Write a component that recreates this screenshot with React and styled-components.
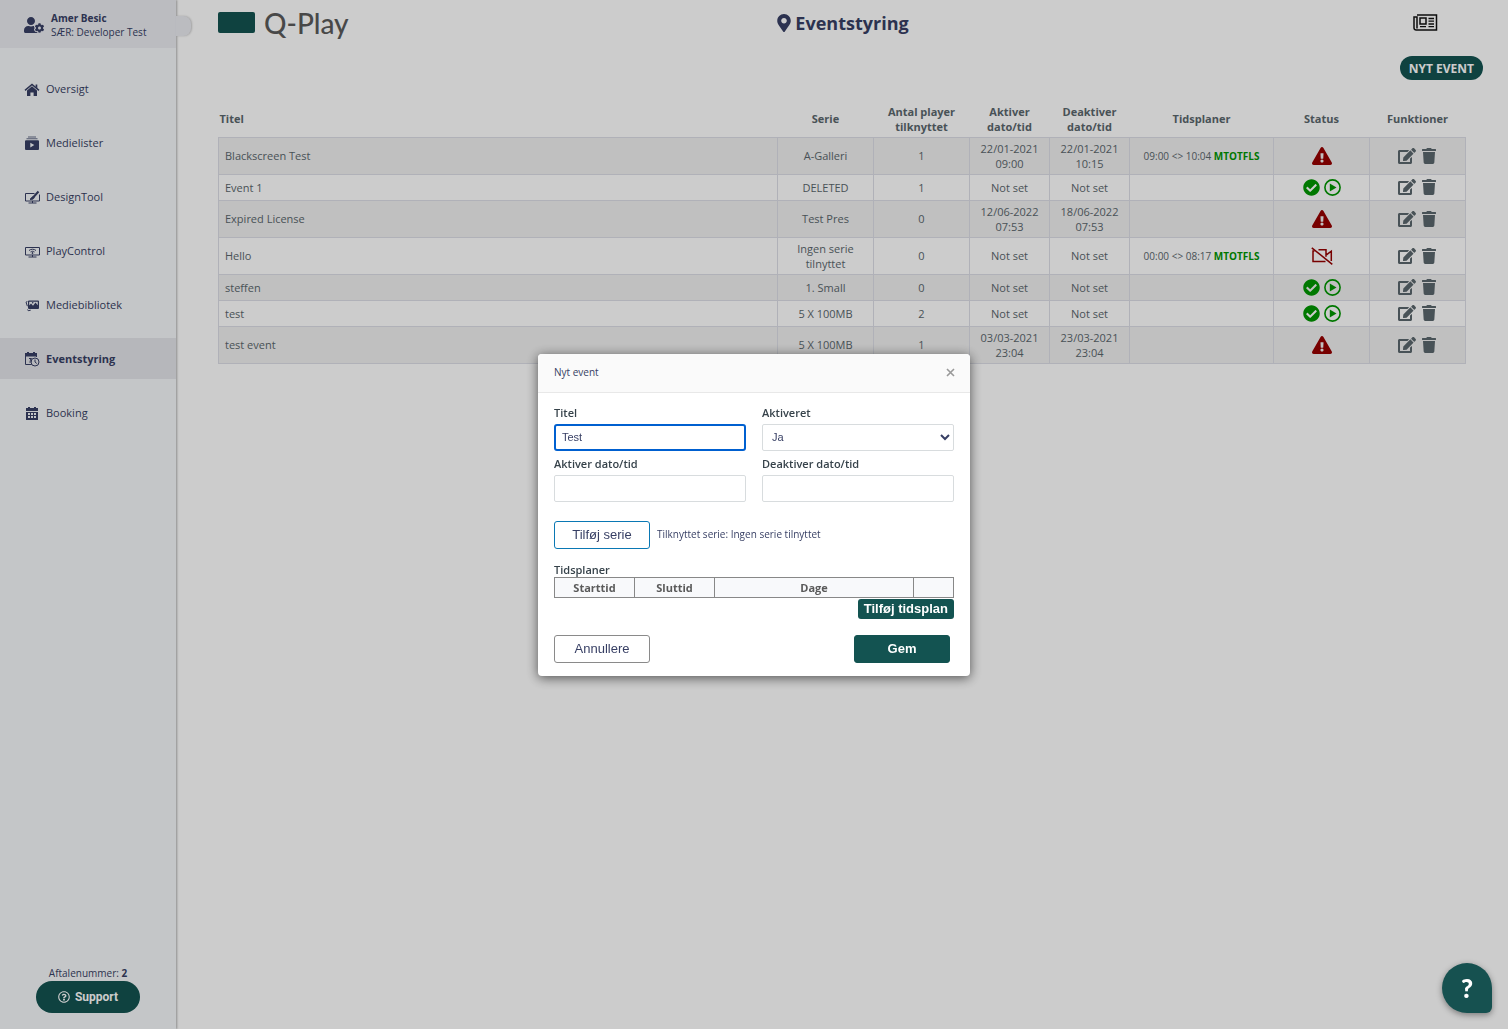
import React from "react";
import styled, { createGlobalStyle } from "styled-components";
import { FaUserCog, FaMapMarkerAlt, FaEdit, FaTrash, FaExclamationTriangle, FaCheckCircle, FaRegQuestionCircle } from "react-icons/fa";

const events = [
    { title: "Blackscreen Test", serie: "A-Galleri", players: 1, from: "22/01-2021 09:00", to: "22/01-2021 10:15", plan: "09:00 <> 10:04", status: "warning" },
    { title: "Event 1", serie: "DELETED", players: 1, from: "Not set", to: "Not set", status: "ok" },
    { title: "Expired License", serie: "Test Pres", players: 0, from: "12/06-2022 07:53", to: "18/06-2022 07:53", status: "warning" },
    { title: "Hello", serie: "Ingen serie tilnyttet", players: 0, from: "Not set", to: "Not set", plan: "00:00 <> 08:17", status: "off" },
    { title: "steffen", serie: "1. Small", players: 0, from: "Not set", to: "Not set", status: "ok" },
    { title: "test", serie: "5 X 100MB", players: 2, from: "Not set", to: "Not set", status: "ok" },
    { title: "test event", serie: "5 X 100MB", players: 1, from: "03/03-2021 23:04", to: "23/03-2021 23:04", status: "warning" },
];

const menu = [
    { name: "Oversigt", Icon: HomeIcon },
    { name: "Medielister", Icon: PlaylistIcon },
    { name: "DesignTool", Icon: DesignIcon },
    { name: "PlayControl", Icon: ControlIcon },
    { name: "Mediebibliotek", Icon: LibraryIcon },
    { name: "Eventstyring", Icon: EventIcon, active: true },
    { name: "Booking", Icon: BookingIcon },
];

function HomeIcon() {
    return (
        <svg width="16" height="16" viewBox="0 0 16 16" fill="currentColor">
            <path d="M8 5.2 13 9.6V15H9.600v-3.600H6.400V15H3V9.600z" />
            <path d="M1 9.400 8 3.400l7 6" fill="none" stroke="currentColor" strokeWidth="1.500" />
            <path d="M11.600 3.400h1.700v4l-1.700-1.400z" />
        </svg>
    );
}

function PlaylistIcon() {
    return (
        <svg width="16" height="16" viewBox="0 0 16 16" fill="currentColor">
            <path d="M4 1.400h8v1H4zM2.500 3.200h11v1.100h-11z" opacity="0.75" />
            <path fillRule="evenodd" d="M2 5.200h12a1 1 0 0 1 1 1V14a1 1 0 0 1-1 1H2a1 1 0 0 1-1-1V6.200a1 1 0 0 1 1-1zM6.300 7.700v4.800l4-2.400z" />
        </svg>
    );
}

function DesignIcon() {
    return (
        <svg width="16" height="16" viewBox="0 0 16 16" fill="none" stroke="currentColor">
            <path d="M10.500 4.500h-9v7.500h14V5.500M8.500 12v2M4.500 14h8" />
            <path d="m14.500 2.500-5 5.500" strokeWidth="2" />
            <path d="M9.500 7.500c-2 0-2 2-3.500 2.800 2 .6 4-.3 4.200-2z" fill="currentColor" />
        </svg>
    );
}

function ControlIcon() {
    return (
        <svg width="16" height="16" viewBox="0 0 16 16" fill="none" stroke="currentColor">
            <path d="M1.500 4.500h14V12h-14zM8.500 12v2M4.500 14h8" />
            <path d="M5 7.500c2-1.700 5-1.700 7 0M6.500 9c1.200-1 2.800-1 4 0" />
            <circle cx="8.500" cy="10" r=".6" fill="currentColor" />
        </svg>
    );
}

function LibraryIcon() {
    return (
        <svg width="16" height="16" viewBox="0 0 16 16" fill="currentColor">
            <path fillRule="evenodd" d="M5 3.500h9a1 1 0 0 1 1 1V11a1 1 0 0 1-1 1H5a1 1 0 0 1-1-1V4.500a1 1 0 0 1 1-1zm.2 1.200v3.800l1.800-2 2 2.200 2.500-3.200 2.300 2.700V4.700z" />
            <circle cx="8.700" cy="5.700" r=".8" />
            <path d="m3.400 4.500-1.400.7 1.400 4M3.500 12.500l.7 1.200 2.500-.5" fill="none" stroke="currentColor" />
        </svg>
    );
}

function EventIcon() {
    return (
        <svg width="16" height="16" viewBox="0 0 16 16" fill="none" stroke="currentColor">
            <path d="M7.500 13.500h-6v-11h11V6" />
            <path d="M1 2h12v3.500H1zM3 1h2v2H3zM9 1h2v2H9z" fill="currentColor" stroke="none" />
            <path d="M5 7.500h2.500L6.200 9.200c1.800 0 1.600 2.300-.9 1.800" />
            <circle cx="11" cy="11" r="4" />
            <path d="M11 8.500V11l1.800 1.500" />
        </svg>
    );
}

function BookingIcon() {
    return (
        <svg width="16" height="16" viewBox="0 0 16 16" fill="currentColor">
            <path d="M4 2h2v2H4zM10 2h2v2h-2z" />
            <path fillRule="evenodd" d="M2 3h12v3H2zM2 7h12v8H2zM4 8v2h2V8zM7 8v2h2V8zM10 8v2h2V8zM4 11v2h2v-2zM7 11v2h2v-2zM10 11v2h2v-2z" />
        </svg>
    );
}

function NewsIcon() {
    return (
        <svg width="25" height="18" viewBox="0 0 25 18" fill="none" stroke="currentColor" strokeWidth="1.500">
            <path d="M4 1h19.500v15H3.200A2.200 2.200 0 0 1 1 14V3h3v11.500" />
            <path d="M7 4h6v6H7z" />
            <path d="M15.500 4.500H21M15.500 7.200H21M15.500 10H21M7 12.700h6M15.500 12.700H21" strokeWidth="1.300" />
        </svg>
    );
}

function PlayIcon() {
    return (
        <svg width="17" height="17" viewBox="0 0 17 17" fill="currentColor">
            <circle cx="8.500" cy="8.500" r="7.600" fill="none" stroke="currentColor" strokeWidth="1.600" />
            <path d="M5.800 4.500v8l6.700-4z" />
        </svg>
    );
}

function VideoOffIcon() {
    return (
        <svg width="22" height="18" viewBox="0 0 22 18" fill="none" stroke="currentColor" strokeWidth="1.500">
            <path d="M7.500 2.700H15v5.500l5.300-4V14M3.500 4H2v10.500h12.500M15 8.200v1.500" />
            <path d="m.8.800 20.500 16.500" />
        </svg>
    );
}

function Status({ type }) {
    if (type === "warning") return <StatusIcons $color="#960000"><FaExclamationTriangle size={20} /></StatusIcons>;
    if (type === "off") return <StatusIcons $color="#960000"><VideoOffIcon /></StatusIcons>;
    return (
        <StatusIcons $color="#009600">
            <FaCheckCircle size={17} />
            <PlayIcon />
        </StatusIcons>
    );
}

export default class App extends React.Component {
    render() {
        return (
            <>
                <GlobalStyle />
                <Page>
                    <Sidebar>
                        <User>
                            <FaUserCog size={20} />
                            <div>
                                <b>Amer Besic</b>
                                <br />
                                SÆR: Developer Test
                            </div>
                            <Handle aria-label="Skjul menu" />
                        </User>
                        <Nav>
                            {menu.map(({ name, Icon, active }) => (
                                <NavItem key={name} href="#" $active={active}>
                                    <Icon />
                                    {name}
                                </NavItem>
                            ))}
                        </Nav>
                        <Agreement>
                            Aftalenummer: <b>2</b>
                        </Agreement>
                        <Support>
                            <FaRegQuestionCircle size={12} />
                            Support
                        </Support>
                    </Sidebar>
                    <Main>
                        <Header>
                            <Logo>
                                <LogoMark />
                                Q-Play
                            </Logo>
                            <Heading>
                                <FaMapMarkerAlt size={18} />
                                Eventstyring
                            </Heading>
                            <News aria-label="Nyheder">
                                <NewsIcon />
                            </News>
                        </Header>
                        <Actions>
                            <NewEvent>NYT EVENT</NewEvent>
                        </Actions>
                        <Events>
                            <colgroup>
                                <col />
                                <Col $w={96} />
                                <Col $w={96} />
                                <Col $w={80} />
                                <Col $w={80} />
                                <Col $w={144} />
                                <Col $w={96} />
                                <Col $w={96} />
                            </colgroup>
                            <thead>
                                <tr>
                                    <th>Titel</th>
                                    <th>Serie</th>
                                    <th>Antal player tilknyttet</th>
                                    <th>Aktiver dato/tid</th>
                                    <th>Deaktiver dato/tid</th>
                                    <th>Tidsplaner</th>
                                    <th>Status</th>
                                    <th>Funktioner</th>
                                </tr>
                            </thead>
                            <tbody>
                                {events.map((e) => (
                                    <tr key={e.title}>
                                        <td>{e.title}</td>
                                        <td>{e.serie}</td>
                                        <td>{e.players}</td>
                                        <td>{e.from}</td>
                                        <td>{e.to}</td>
                                        <td>{e.plan && <Plan>{e.plan} <b>MTOTFLS</b></Plan>}</td>
                                        <td><Status type={e.status} /></td>
                                        <td>
                                            <Functions>
                                                <IconButton aria-label="Rediger"><FaEdit size={18} /></IconButton>
                                                <IconButton aria-label="Slet"><FaTrash size={16} /></IconButton>
                                            </Functions>
                                        </td>
                                    </tr>
                                ))}
                            </tbody>
                        </Events>
                    </Main>
                </Page>
                <Overlay>
                    <Modal role="dialog" aria-labelledby="modal-title">
                        <ModalHeader>
                            <span id="modal-title">Nyt event</span>
                            <Close aria-label="Luk">
                                <svg width="9" height="9" viewBox="0 0 9 9" stroke="currentColor" strokeWidth="1.600">
                                    <path d="m1 1 7 7M8 1 1 8" />
                                </svg>
                            </Close>
                        </ModalHeader>
                        <ModalBody>
                            <Fields>
                                <Field>
                                    <label htmlFor="title">Titel</label>
                                    <Input id="title" defaultValue="Test" $focused />
                                </Field>
                                <Field>
                                    <label htmlFor="active">Aktiveret</label>
                                    <Select id="active" defaultValue="Ja">
                                        <option>Ja</option>
                                        <option>Nej</option>
                                    </Select>
                                </Field>
                                <Field>
                                    <label htmlFor="from">Aktiver dato/tid</label>
                                    <Input id="from" />
                                </Field>
                                <Field>
                                    <label htmlFor="to">Deaktiver dato/tid</label>
                                    <Input id="to" />
                                </Field>
                            </Fields>
                            <SerieRow>
                                <Button $border="#0a78b4">Tilføj serie</Button>
                                <span>Tilknyttet serie: Ingen serie tilnyttet</span>
                            </SerieRow>
                            <Plans>
                                <caption>Tidsplaner</caption>
                                <colgroup>
                                    <Col $w={80} />
                                    <Col $w={80} />
                                    <col />
                                    <Col $w={40} />
                                </colgroup>
                                <thead>
                                    <tr>
                                        <th>Starttid</th>
                                        <th>Sluttid</th>
                                        <th>Dage</th>
                                        <th />
                                    </tr>
                                </thead>
                            </Plans>
                            <AddPlan>Tilføj tidsplan</AddPlan>
                            <Footer>
                                <Button $border="#8a8a8a">Annullere</Button>
                                <Button $primary>Gem</Button>
                            </Footer>
                        </ModalBody>
                    </Modal>
                </Overlay>
                <Help aria-label="Hjælp">?</Help>
            </>
        );
    }
}

const GlobalStyle = createGlobalStyle`
    * {
        box-sizing: border-box;
    }
    body {
        margin: 0;
        background: #fff;
        color: #373f64;
        font-family: 'Open Sans', 'Noto Sans', sans-serif;
        font-size: 11px;
        line-height: 15px;
    }
    button {
        padding: 0;
        border: 0;
        background: none;
        color: inherit;
        font-family: inherit;
        cursor: pointer;
    }
`
const Page = styled.div`
    display: flex;
    min-height: 100vh;
`
const Sidebar = styled.aside`
    display: flex;
    flex-direction: column;
    align-items: center;
    flex: 0 0 176px;
    padding-bottom: 16px;
    background-color: #f6f8fa;
    box-shadow: 1px 0 2px rgba(0, 0, 0, 0.3);
`
const User = styled.div`
    position: relative;
    display: flex;
    align-items: center;
    gap: 7px;
    width: 100%;
    height: 48px;
    padding: 2px 0 0 24px;
    background-color: #eaebf1;
    font-size: 10px;
    line-height: 14px;
    white-space: nowrap;
`
const Handle = styled.button`
    position: absolute;
    left: 100%;
    top: 16px;
    width: 15px;
    height: 20px;
    border-radius: 0 8px 8px 0;
    background-color: #eaebf1;
    box-shadow: 1px 0 2px rgba(0, 0, 0, 0.2);
`
const Nav = styled.nav`
    display: flex;
    flex-direction: column;
    gap: 13px;
    width: 100%;
    padding-top: 20px;
`
const NavItem = styled.a`
    display: flex;
    align-items: center;
    gap: 6px;
    height: 41px;
    padding-left: 24px;
    background-color: ${(p) => (p.$active ? "#e4e5ea" : "transparent")};
    color: inherit;
    font-size: 11px;
    font-weight: ${(p) => (p.$active ? 700 : 400)};
    text-decoration: none;
`
const Agreement = styled.div`
    margin-top: auto;
    font-size: 10px;
`
const Support = styled.button`
    display: flex;
    align-items: center;
    justify-content: center;
    gap: 5px;
    width: 104px;
    height: 32px;
    border-radius: 16px;
    background-color: #135351;
    color: #fff;
    font-family: Roboto, sans-serif;
    font-size: 12px;
    font-weight: 700;
`
const Main = styled.main`
    flex: 1;
    min-width: 0;
    padding: 0 42px;
`
const Header = styled.header`
    display: grid;
    grid-template-columns: 1fr auto 1fr;
    align-items: center;
    height: 45px;
`
const Logo = styled.div`
    display: flex;
    align-items: center;
    gap: 9px;
    color: #5a5a5a;
    font-family: Lato, sans-serif;
    font-size: 28px;
    font-weight: 500;
    line-height: 34px;
`
const LogoMark = styled.span`
    width: 37px;
    height: 21px;
    border-radius: 2px;
    background-color: #135351;
`
const Heading = styled.h1`
    display: flex;
    align-items: center;
    gap: 2px;
    margin: 0;
    font-size: 18px;
    line-height: 24px;
`
const News = styled.button`
    display: flex;
    justify-self: end;
    margin-right: 28px;
    color: #111;
`
const Actions = styled.div`
    display: flex;
    justify-content: flex-end;
    margin: 11px -17px 21px 0;
`
const NewEvent = styled.button`
    height: 24px;
    padding: 0 9px;
    border-radius: 12px;
    background-color: #135351;
    color: #fff;
    font-size: 12px;
    font-weight: 700;
`
const Col = styled.col`
    width: ${(p) => p.$w}px;
`
const Events = styled.table`
    width: 100%;
    table-layout: fixed;
    border-collapse: collapse;
    color: #5b676d;
    text-align: center;

    th {
        height: 36px;
        padding: 0 1px;
    }
    td {
        height: 26px;
        padding: 3px 10px;
        border: 1px solid #dcdee6;
    }
    th:first-child,
    td:first-child {
        text-align: left;
    }
    td:first-child {
        padding-left: 6px;
    }
    tbody tr:nth-child(odd) {
        background-color: #f0f0f0;
    }
`
const Plan = styled.span`
    font-size: 10px;
    white-space: nowrap;

    b {
        color: #009600;
    }
`
const StatusIcons = styled.div`
    display: flex;
    align-items: center;
    justify-content: center;
    gap: 4px;
    height: 18px;
    color: ${(p) => p.$color};
`
const Functions = styled.div`
    display: flex;
    align-items: center;
    justify-content: center;
    gap: 5px;
`
const IconButton = styled.button`
    display: flex;
`
const Overlay = styled.div`
    position: fixed;
    inset: 0;
    display: flex;
    align-items: center;
    justify-content: center;
    background-color: rgba(0, 0, 0, 0.2);
`
const Modal = styled.div`
    width: 432px;
    border-radius: 4px;
    background-color: #fff;
    box-shadow: 0 2px 12px rgba(0, 0, 0, 0.6);
`
const ModalHeader = styled.div`
    display: flex;
    align-items: center;
    justify-content: space-between;
    height: 39px;
    padding: 0 15px 0 16px;
    border-bottom: 1px solid #e8e8e8;
    border-radius: 4px 4px 0 0;
    background-color: #fafafa;
    font-size: 10px;
`
const Close = styled.button`
    display: flex;
    color: #999;
`
const ModalBody = styled.div`
    display: flex;
    flex-direction: column;
    padding: 12px 16px 13px;
`
const Fields = styled.div`
    display: grid;
    grid-template-columns: 1fr 1fr;
    gap: 5px 16px;
`
const Field = styled.div`
    display: flex;
    flex-direction: column;
    gap: 4px;
    color: #36424a;
    font-weight: 600;
`
const Input = styled.input`
    width: 100%;
    height: 27px;
    padding: 0 6px;
    border: ${(p) => (p.$focused ? "2px solid #0060d0" : "1px solid #d8dcde")};
    border-radius: ${(p) => (p.$focused ? 3 : 2)}px;
    outline: 0;
    color: #373f64;
    font-family: 'Liberation Sans', Arial, sans-serif;
    font-size: 11px;
`
const Select = styled.select`
    width: 100%;
    height: 27px;
    padding: 0 5px;
    border: 1px solid #d8dcde;
    border-radius: 2px;
    background-color: #fff;
    color: #373f64;
    font-family: 'Liberation Sans', Arial, sans-serif;
    font-size: 11px;
`
const SerieRow = styled.div`
    display: flex;
    align-items: center;
    gap: 7px;
    margin: 19px 0 13px;
    font-size: 10px;
`
const Button = styled.button`
    width: 96px;
    height: 28px;
    border: 1px solid ${(p) => (p.$primary ? "#135351" : p.$border)};
    border-radius: 3px;
    background-color: ${(p) => (p.$primary ? "#135351" : "#fff")};
    color: ${(p) => (p.$primary ? "#fff" : "#373f64")};
    font-family: 'Liberation Sans', Arial, sans-serif;
    font-size: 13px;
    font-weight: ${(p) => (p.$primary ? 700 : 400)};
`
const Plans = styled.table`
    width: 100%;
    table-layout: fixed;
    border-collapse: collapse;

    caption {
        color: #36424a;
        font-weight: 600;
        text-align: left;
    }
    th {
        height: 20px;
        padding: 0;
        border: 1px solid #888;
        background-color: #f8f9fb;
        color: #5a5a5a;
    }
`
const AddPlan = styled.button`
    align-self: flex-end;
    height: 20px;
    margin-top: 1px;
    padding: 0 6px;
    border-radius: 3px;
    background-color: #135351;
    color: #fff;
    font-family: 'Liberation Sans', Arial, sans-serif;
    font-size: 13px;
    font-weight: 700;
`
const Footer = styled.div`
    display: flex;
    justify-content: space-between;
    margin-top: 16px;
    padding-right: 4px;
`
const Help = styled.button`
    position: fixed;
    right: 16px;
    bottom: 16px;
    width: 50px;
    height: 50px;
    border-radius: 25px 25px 6px 25px;
    background-color: #165150;
    box-shadow: 0 2px 6px rgba(0, 0, 0, 0.4);
    color: #fff;
    font-family: Lato, sans-serif;
    font-size: 26px;
    font-weight: 900;
`
